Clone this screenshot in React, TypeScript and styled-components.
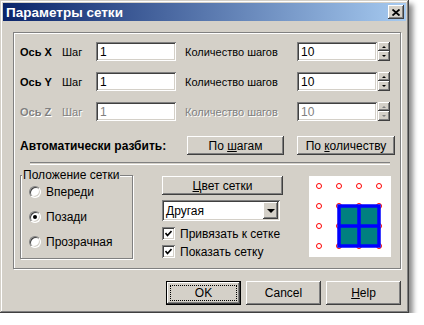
import styled, { createGlobalStyle, css } from "styled-components";

const face = "#D4D0C8";

const GlobalStyle = createGlobalStyle`
  body {
    margin: 0;
    background: #fff;
    font-family: "Liberation Sans", Arial, sans-serif;
    font-size: 11px;
    color: #000;
  }
`;

const raised = css`
  box-shadow: inset -1px -1px #404040, inset 1px 1px #fff, inset -2px -2px #808080, inset 2px 2px ${face};
`;

const sunken = css`
  box-shadow: inset 1px 1px #808080, inset -1px -1px #fff, inset 2px 2px #404040, inset -2px -2px ${face};
`;

const etched = css`
  border: 1px solid #808080;
  box-shadow: inset 1px 1px #fff, 1px 1px #fff;
`;

const Window = styled.div`
  width: 409px;
  height: 313px;
  box-sizing: border-box;
  padding: 3px;
  background: ${face};
  display: flex;
  flex-direction: column;
  box-shadow: inset -1px -1px #404040, inset 1px 1px ${face}, inset -2px -2px #808080, inset 2px 2px #fff,
    4px 4px 5px rgba(0, 0, 0, 0.45);
`;

const TitleBar = styled.div`
  height: 18px;
  display: flex;
  align-items: center;
  justify-content: space-between;
  padding: 0 2px 0 3px;
  background: linear-gradient(to right, #0a246a, #a6caf0);
  color: #fff;
  font-weight: bold;
  font-size: 13.5px;
`;

const CloseButton = styled.div`
  width: 16px;
  height: 14px;
  background: ${face};
  ${raised};
  display: flex;
  align-items: center;
  justify-content: center;
`;

const Content = styled.div`
  padding: 11px 5px 0 10px;
  display: flex;
  flex-direction: column;
`;

const MainGroup = styled.div`
  width: 388px;
  height: 237px;
  box-sizing: border-box;
  ${etched};
  padding: 9px 0 0 6px;
  display: flex;
  flex-direction: column;
`;

const Rows = styled.div`
  display: flex;
  flex-direction: column;
  gap: 11px;
`;

const Row = styled.div`
  display: flex;
  align-items: center;
  height: 19px;
`;

const Label = styled.span<{ $w: number; $pad?: number; $bold?: boolean; $size?: number; $disabled?: boolean }>`
  width: ${(p) => p.$w}px;
  padding-left: ${(p) => p.$pad ?? 0}px;
  box-sizing: border-box;
  flex: none;
  white-space: nowrap;
  font-size: ${(p) => p.$size ?? 11}px;
  font-weight: ${(p) => (p.$bold ? "bold" : "normal")};
  color: ${(p) => (p.$disabled ? "#808080" : "#000")};
  text-shadow: ${(p) => (p.$disabled ? "1px 1px #fff" : "none")};
`;

const Field = styled.div<{ $disabled?: boolean }>`
  width: 80px;
  height: 19px;
  box-sizing: border-box;
  flex: none;
  background: #fff;
  ${sunken};
  padding: 2px 3px 0 4px;
  font-size: 12px;
  line-height: 16px;
  color: ${(p) => (p.$disabled ? "#808080" : "#000")};
`;

const Spinner = styled.div`
  width: 12px;
  height: 19px;
  margin-left: 1px;
  display: flex;
  flex-direction: column;
`;

const SpinButton = styled.div<{ $h: number }>`
  height: ${(p) => p.$h}px;
  background: ${face};
  ${raised};
  display: flex;
  align-items: center;
  justify-content: center;
`;

const Arrow = styled.span<{ $dir: "up" | "down"; $size: number; $disabled?: boolean }>`
  width: 0;
  height: 0;
  border-left: ${(p) => p.$size}px solid transparent;
  border-right: ${(p) => p.$size}px solid transparent;
  ${(p) =>
    p.$dir === "up"
      ? css`border-bottom: ${p.$size}px solid ${p.$disabled ? "#808080" : "#000"};`
      : css`border-top: ${p.$size}px solid ${p.$disabled ? "#808080" : "#000"};`}
`;

const Button = styled.div<{ $w: number; $h?: number; $ml?: number }>`
  width: ${(p) => p.$w}px;
  height: ${(p) => p.$h ?? 19}px;
  margin-left: ${(p) => p.$ml ?? 0}px;
  box-sizing: border-box;
  flex: none;
  background: ${face};
  ${raised};
  display: flex;
  align-items: center;
  justify-content: center;
  white-space: nowrap;
  font-size: 12px;
`;

const DefaultButton = styled(Button)`
  border: 1px solid #000;
  position: relative;
  &::after {
    content: "";
    position: absolute;
    inset: 3px;
    border: 1px dotted #000;
  }
`;

const AutoRow = styled(Row)`
  margin-top: 15px;
`;

const Separator = styled.div`
  height: 1px;
  border-top: 1px solid #808080;
  border-bottom: 1px solid #fff;
  margin: 7px 10px 0 10px;
`;

const Bottom = styled.div`
  display: flex;
  align-items: flex-start;
  margin-top: 10px;
`;

const RadioGroup = styled.div`
  position: relative;
  width: 113px;
  height: 84px;
  box-sizing: border-box;
  ${etched};
  padding: 9px 0 0 8px;
  display: flex;
  flex-direction: column;
  gap: 11px;
  margin-right: 29px;
`;

const Legend = styled.span`
  position: absolute;
  top: -7px;
  left: 1px;
  padding: 0 1px;
  background: ${face};
  font-size: 12px;
  line-height: 13px;
`;

const Option = styled.div`
  display: flex;
  align-items: center;
  gap: 5px;
  height: 14px;
  font-size: 12px;
`;

const Radio = styled.span<{ $checked?: boolean }>`
  width: 12px;
  height: 12px;
  box-sizing: border-box;
  border-radius: 50%;
  background: #fff;
  border: 1px solid;
  border-color: #808080 #fff #fff #808080;
  box-shadow: inset 1px 1px 0 #404040, inset -1px -1px 0 ${face};
  display: flex;
  align-items: center;
  justify-content: center;
  &::after {
    content: "";
    width: 4px;
    height: 4px;
    border-radius: 50%;
    background: ${(p) => (p.$checked ? "#000" : "transparent")};
  }
`;

const MiddleCol = styled.div`
  width: 121px;
  margin-top: 1px;
  display: flex;
  flex-direction: column;
`;

const Combo = styled.div`
  width: 118px;
  height: 21px;
  margin-top: 5px;
  box-sizing: border-box;
  background: #fff;
  ${sunken};
  padding: 2px;
  display: flex;
  align-items: center;
  justify-content: space-between;
  font-size: 12px;
`;

const ComboText = styled.span`
  padding-left: 2px;
`;

const ComboButton = styled.div`
  width: 15px;
  height: 17px;
  background: ${face};
  ${raised};
  display: flex;
  align-items: center;
  justify-content: center;
`;

const Check = styled.div<{ $top: number }>`
  display: flex;
  align-items: center;
  gap: 5px;
  height: 13px;
  margin-top: ${(p) => p.$top}px;
  font-size: 12px;
`;

const CheckBox = styled.span`
  width: 13px;
  height: 13px;
  box-sizing: border-box;
  background: #fff;
  ${sunken};
  display: flex;
  align-items: center;
  justify-content: center;
`;

const Preview = styled.div`
  width: 82px;
  height: 81px;
  margin: 1px 0 0 26px;
  background: #fff;
`;

const Footer = styled.div`
  display: flex;
  justify-content: flex-end;
  gap: 5px;
  margin-top: 12px;
`;

const axes = [
  { name: "Ось X", step: "1", count: "10" },
  { name: "Ось Y", step: "1", count: "10" },
  { name: "Ось Z", step: "1", count: "10", disabled: true },
];

const dots = [10, 30, 50, 70];

const CheckMark = () => (
  <svg width="7" height="7" viewBox="0 0 7 7">
    <path d="M0.5 3 L2.5 5.5 L6.5 1" stroke="#000" strokeWidth="1.6" fill="none" />
  </svg>
);

export default function App() {
  return (
    <>
      <GlobalStyle />
      <Window>
        <TitleBar>
          <span>Параметры сетки</span>
          <CloseButton>
            <svg width="8" height="7" viewBox="0 0 8 7">
              <path d="M0.5 0.5 L7.5 6.5 M7.5 0.5 L0.5 6.5" stroke="#000" strokeWidth="1.8" />
            </svg>
          </CloseButton>
        </TitleBar>
        <Content>
          <MainGroup>
            <Rows>
              {axes.map((a) => (
                <Row key={a.name}>
                  <Label $w={42} $bold $disabled={a.disabled}>{a.name}</Label>
                  <Label $w={34} $disabled={a.disabled}>Шаг</Label>
                  <Field $disabled={a.disabled}>{a.step}</Field>
                  <Label $w={121} $pad={9} $disabled={a.disabled}>Количество шагов</Label>
                  <Field $disabled={a.disabled}>{a.count}</Field>
                  <Spinner>
                    <SpinButton $h={9}>
                      <Arrow $dir="up" $size={2} $disabled={a.disabled} />
                    </SpinButton>
                    <SpinButton $h={10}>
                      <Arrow $dir="down" $size={2} $disabled={a.disabled} />
                    </SpinButton>
                  </Spinner>
                </Row>
              ))}
            </Rows>
            <AutoRow>
              <Label $w={167} $bold $size={12}>Автоматически разбить:</Label>
              <Button $w={97}>
                По&nbsp;<u>ш</u>агам
              </Button>
              <Button $w={98} $ml={13}>
                По&nbsp;<u>к</u>оличеству
              </Button>
            </AutoRow>
            <Separator />
            <Bottom>
              <RadioGroup>
                <Legend>Положение сетки</Legend>
                <Option>
                  <Radio />
                  Впереди
                </Option>
                <Option>
                  <Radio $checked />
                  Позади
                </Option>
                <Option>
                  <Radio />
                  Прозрачная
                </Option>
              </RadioGroup>
              <MiddleCol>
                <Button $w={121}>
                  <u>Ц</u>вет сетки
                </Button>
                <Combo>
                  <ComboText>Другая</ComboText>
                  <ComboButton>
                    <Arrow $dir="down" $size={4} />
                  </ComboButton>
                </Combo>
                <Check $top={6}>
                  <CheckBox>
                    <CheckMark />
                  </CheckBox>
                  Привязать к сетке
                </Check>
                <Check $top={5}>
                  <CheckBox>
                    <CheckMark />
                  </CheckBox>
                  Показать сетку
                </Check>
              </MiddleCol>
              <Preview>
                <svg width="82" height="81" viewBox="0 0 82 81">
                  {dots.map((y) =>
                    dots.map((x) => (
                      <circle key={`${x}-${y}`} cx={x} cy={y} r="2.5" fill="none" stroke="#f00" strokeWidth="1" />
                    ))
                  )}
                  <rect x="30" y="30" width="40" height="40" fill="#008080" />
                  <path
                    d="M30 30 H70 M30 50 H70 M30 70 H70 M30 30 V70 M50 30 V70 M70 30 V70"
                    stroke="#00f"
                    strokeWidth="3.5"
                    strokeLinecap="square"
                  />
                </svg>
              </Preview>
            </Bottom>
          </MainGroup>
          <Footer>
            <DefaultButton $w={75} $h={24}>OK</DefaultButton>
            <Button $w={75} $h={24}>Cancel</Button>
            <Button $w={75} $h={24}>
              <u>H</u>elp
            </Button>
          </Footer>
        </Content>
      </Window>
    </>
  );
}
